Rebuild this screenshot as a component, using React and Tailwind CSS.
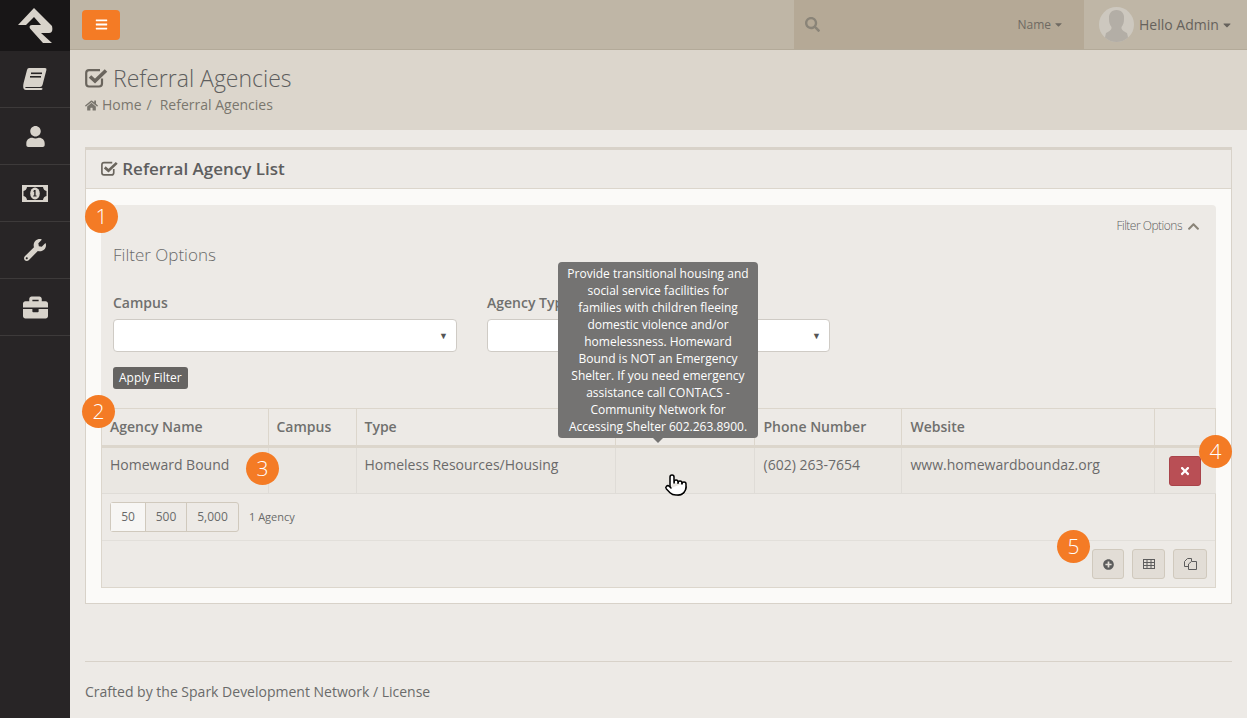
import {
  FaBars,
  FaSearch,
  FaCaretDown,
  FaHome,
  FaChevronUp,
  FaTimes,
  FaPlusCircle,
  FaUser,
  FaWrench,
  FaBriefcase,
} from "react-icons/fa";
import { Pointer } from "lucide-react";

function Logo() {
  return (
    <svg width="35" height="36" viewBox="0 0 35 36" fill="#d8d3cb">
      <path d="M0 17 L16 0 L34 18 Q35.5 25 31 25 L23 25 L34 35 L25 35 L12 20.5 Q10.5 17 14 17 L23 17 L16 9 L8 17 Z" />
    </svg>
  );
}

function BookIcon() {
  return (
    <svg width="24" height="22" viewBox="0 0 24 22" fill="#d8d3cb">
      <path d="M6 0 H22 Q24 0 23.4 2 L19.5 17 Q19 19 17 19 H3 Q2 19 2.3 20 H18 Q20 20 19.5 21 Q19.3 22 18 22 H3 Q0 22 0.2 18 Q0.2 17 0.6 15 L4 2 Q4.4 0 6 0 Z" />
      <rect x="8" y="4.5" width="11" height="1.6" fill="#282526" />
      <rect x="7" y="8" width="11" height="1.6" fill="#282526" />
    </svg>
  );
}

function MoneyIcon() {
  return (
    <svg width="26" height="17" viewBox="0 0 26 17">
      <rect width="26" height="17" fill="#d8d3cb" />
      <path d="M5 2 H21 Q21.5 5.5 24.5 6 V11 Q21.5 11.5 21 15 H5 Q4.5 11.5 1.5 11 V6 Q4.5 5.5 5 2 Z" fill="#282526" />
      <ellipse cx="13" cy="8.5" rx="4.8" ry="6" fill="#d8d3cb" />
      <path d="M12 5 h1.6 v5.5 h1 v1 h-3.4 v-1 h1 v-3.8 h-1 z" fill="#282526" />
    </svg>
  );
}

function CheckBox({ size, color }) {
  return (
    <svg width={size * 1.15} height={size} viewBox="0 0 23 20" fill="none" stroke={color}>
      <path d="M17 10.5 V15.5 Q17 18.5 14 18.5 H4 Q1.2 18.5 1.2 15.5 V5 Q1.2 2.2 4 2.2 H15" strokeWidth="2.2" />
      <path d="M5 8.5 L10 13 L21 2.5" strokeWidth="3.6" />
    </svg>
  );
}

function Avatar() {
  return (
    <svg width="35" height="35" viewBox="0 0 35 35" className="rounded-full">
      <rect width="35" height="35" fill="#cdc8bf" />
      <path d="M17.5 3 C23 3 25.5 7 25 12 C25 16 24 18 22.5 20 C22 23 25 24.5 28 26 Q29 30 30 35 H5 Q6 30 7 26 C10 24.5 13 23 12.5 20 C11 18 10 16 10 12 C9.5 7 12 3 17.5 3 Z" fill="#b3aea6" />
    </svg>
  );
}

function TableIcon() {
  return (
    <svg width="12" height="10" viewBox="0 0 12 10" fill="none" stroke="#5c5c5c" strokeWidth="1">
      <rect x="0.5" y="0.5" width="11" height="9" />
      <path d="M0.5 3.5 H11.5 M0.5 6.5 H11.5 M4 0.5 V9.5 M8 0.5 V9.5" />
    </svg>
  );
}

function CopyIcon() {
  return (
    <svg width="13" height="12" viewBox="0 0 13 12" fill="none" stroke="#5c5c5c" strokeWidth="1">
      <path d="M7.5 3 V0.5 H3.5 L0.5 3.5 V8.5 H4" />
      <path d="M4.5 11.5 V6 L7.5 3.5 H12.5 V11.5 Z" />
    </svg>
  );
}

function Badge({ n, className }) {
  return (
    <div className={`absolute z-20 w-[33px] h-[33px] rounded-full bg-[#f47b25] text-white text-[21px] font-light flex items-center justify-center ${className}`}>
      {n}
    </div>
  );
}

function SideItem({ children }) {
  return (
    <div className="h-[57px] border-b border-[#3d3a3a] flex items-center justify-center">
      {children}
    </div>
  );
}

function SelectBox({ label, width }) {
  return (
    <div className={width}>
      <label className="block font-semibold text-[14px] leading-5 mb-[6px] text-[#70706e]">{label}</label>
      <div className="h-[33px] bg-white border border-[#cfcbc5] rounded-[4px] flex items-center justify-end pr-2 text-[#555] text-[9px]">
        ▼
      </div>
    </div>
  );
}

const headers = [
  { label: "Agency Name", w: "w-[166px] pl-2" },
  { label: "Campus", w: "w-[88px] pl-2" },
  { label: "Type", w: "w-[259px] pl-2" },
  { label: "", w: "w-[139px] pl-2" },
  { label: "Phone Number", w: "w-[147px] pl-[9px]" },
  { label: "Website", w: "w-[253px] pl-[9px]" },
  { label: "", w: "w-[62px]" },
];

export default function App() {
  return (
    <div
      className="relative flex h-[718px] overflow-hidden bg-[#edeae6] text-[14px] text-[#6a6a6a]"
      style={{ fontFamily: '"Open Sans", sans-serif' }}
    >
      {/* Sidebar */}
      <aside className="w-[70px] shrink-0 bg-[#282526]">
        <div className="h-[51px] bg-[#181617] flex items-center justify-center">
          <Logo />
        </div>
        <SideItem><BookIcon /></SideItem>
        <SideItem><FaUser size={21} className="text-[#d8d3cb]" /></SideItem>
        <SideItem><MoneyIcon /></SideItem>
        <SideItem><FaWrench size={22} className="text-[#d8d3cb]" /></SideItem>
        <SideItem><FaBriefcase size={25} className="text-[#d8d3cb]" /></SideItem>
      </aside>

      <div className="flex-1 min-w-0 flex flex-col">
        {/* Top bar */}
        <header className="h-[50px] shrink-0 bg-[#bfb6a6] border-b border-[#b3aa99] flex items-center">
          <div className="flex-1 pl-3">
            <button className="w-[38px] h-[30px] rounded-[4px] bg-[#f47b25] text-white flex items-center justify-center">
              <FaBars size={13} />
            </button>
          </div>
          <div className="w-[290px] h-full bg-[#b5a996] flex items-center justify-between pl-[11px] pr-[20px] text-[#6f6a62]">
            <FaSearch size={15} className="text-[#8a8478]" />
            <span className="flex items-center gap-[2px] text-[12px]">Name <FaCaretDown size={11} /></span>
          </div>
          <div className="w-[163px] h-full flex items-center pl-[15px] gap-[5px] text-[#66625c]">
            <Avatar />
            <span className="flex items-center gap-[2px] text-[14px]">Hello Admin <FaCaretDown size={12} /></span>
          </div>
        </header>

        {/* Page title */}
        <div className="h-[80px] shrink-0 bg-[#dcd6cc] px-[15px] pt-[13px]">
          <h1 className="flex items-center gap-[5px] text-[23px] leading-[30px] font-light text-[#5e5e5e]">
            <CheckBox size={20} color="#6a655d" /> Referral Agencies
          </h1>
          <div className="flex items-center mt-[2px] text-[14px] leading-5 text-[#7a766e]">
            <FaHome size={13} className="mr-[4px]" /> Home <span className="ml-[5px] mr-[8px]">/</span> Referral Agencies
          </div>
        </div>

        {/* Main */}
        <main className="flex-1 px-[15px] pt-[17px] flex flex-col">
          <section className="h-[457px] bg-[#fbfaf8] border border-[#d8d2c9] border-t-[3px]">
            <div className="h-[39px] bg-[#edeae6] border-b border-[#dcd6cc] flex items-center gap-[4px] px-[15px] pb-[1px] text-[17px] font-semibold text-[#5e5e5e]">
              <CheckBox size={15} color="#6a655d" /> Referral Agency List
            </div>

            <div className="px-[15px] pt-[16px]">
              {/* Filter */}
              <div className="h-[203px] bg-[#edeae6] rounded-t-[4px] px-[12px] pt-[12px]">
                <div className="flex justify-end items-center gap-[4px] pr-[4px] text-[12px] tracking-[-0.5px] font-light text-[#5e5e5e]">
                  Filter Options <FaChevronUp size={13} className="text-[#8a8478] ml-[1px]" />
                </div>
                <h3 className="mt-[8px] text-[17px] leading-6 font-light text-[#6a6a6a]">Filter Options</h3>
                <div className="flex gap-[30px] mt-[26px]">
                  <SelectBox label="Campus" width="w-[344px]" />
                  <SelectBox label="Agency Type" width="w-[343px]" />
                </div>
                <button className="mt-[15px] h-[22px] px-[6px] rounded-[3px] bg-[#666462] text-white text-[12px] flex items-center">
                  Apply Filter
                </button>
              </div>

              {/* Grid */}
              <div className="bg-[#edeae6] border border-[#dcd6cc] border-t-0">
                <table className="w-full table-fixed border-collapse">
                  <thead>
                    <tr className="h-[38px] border-t border-b-[3px] border-[#dcd6cc]">
                      {headers.map((h, i) => (
                        <th key={i} className={`${h.w} pb-[2px] text-left font-semibold text-[14px] text-[#70706e] ${i < 6 ? "border-r border-[#dcd6cc]" : ""}`}>
                          {h.label}
                        </th>
                      ))}
                    </tr>
                  </thead>
                  <tbody>
                    <tr className="h-[47px] bg-[#eae7e2] border-b border-[#dfdcd7]">
                      <td className="px-2 pt-[6px] align-top border-r border-[#dfdcd7]">Homeward Bound</td>
                      <td className="border-r border-[#dfdcd7]"></td>
                      <td className="px-2 pt-[6px] align-top border-r border-[#dfdcd7]">Homeless Resources/Housing</td>
                      <td className="border-r border-[#dfdcd7]"></td>
                      <td className="pl-[9px] pt-[6px] align-top border-r border-[#dfdcd7]">(602) 263-7654</td>
                      <td className="pl-[9px] pt-[6px] align-top border-r border-[#dfdcd7]">www.homewardboundaz.org</td>
                      <td className="pl-[14px] align-middle">
                        <button className="w-[32px] h-[30px] rounded-[3px] bg-[#b94f55] border border-[#a9444a] text-white flex items-center justify-center">
                          <FaTimes size={12} />
                        </button>
                      </td>
                    </tr>
                  </tbody>
                </table>

                {/* Pager */}
                <div className="h-[47px] border-b border-[#e2dfda] flex items-center px-2 gap-[10px]">
                  <div className="flex h-[30px] border border-[#d0c9bd] rounded-[3px] text-[12px]">
                    <span className="w-[35px] bg-[#f7f6f4] flex items-center justify-center border-r border-[#d0c9bd]">50</span>
                    <span className="w-[41px] flex items-center justify-center border-r border-[#d0c9bd]">500</span>
                    <span className="w-[51px] flex items-center justify-center">5,000</span>
                  </div>
                  <span className="text-[11px]">1 Agency</span>
                </div>

                {/* Actions */}
                <div className="h-[46px] flex items-center justify-end gap-[8px] pr-[8px]">
                  <button className="w-[32px] h-[30px] rounded-[3px] bg-[#e2ddd6] border border-[#d0c9bd] text-[#5c5c5c] flex items-center justify-center"><FaPlusCircle size={11} /></button>
                  <button className="w-[33px] h-[30px] rounded-[3px] bg-[#e2ddd6] border border-[#d0c9bd] flex items-center justify-center"><TableIcon /></button>
                  <button className="w-[34px] h-[30px] rounded-[3px] bg-[#e2ddd6] border border-[#d0c9bd] flex items-center justify-center"><CopyIcon /></button>
                </div>
              </div>
            </div>
          </section>

          {/* Footer */}
          <footer className="mt-[57px] border-t border-[#d8d2c9] pt-[19px] text-[14px] text-[#6a6a6a]">
            Crafted by the Spark Development Network / License
          </footer>
        </main>
      </div>

      {/* Tooltip */}
      <div className="absolute z-10 left-[558px] top-[262px] w-[200px] h-[176px] rounded-[4px] bg-[#747372] text-white text-[12px] leading-[17px] text-center px-[8px] py-[3px]">
        Provide transitional housing and social service facilities for families with children fleeing domestic violence and/or homelessness. Homeward Bound is NOT an Emergency Shelter. If you need emergency assistance call CONTACS - Community Network for Accessing Shelter 602.263.8900.
        <div className="absolute left-1/2 -translate-x-1/2 top-full w-0 h-0 border-x-[5px] border-x-transparent border-t-[5px] border-t-[#747372]"></div>
      </div>

      <Pointer size={24} strokeWidth={1.5} className="absolute z-30 left-[664px] top-[473px] text-black fill-white" />

      <Badge n="1" className="left-[85px] top-[200px]" />
      <Badge n="2" className="left-[82px] top-[395px]" />
      <Badge n="3" className="left-[246px] top-[452px]" />
      <Badge n="4" className="left-[1199px] top-[435px]" />
      <Badge n="5" className="left-[1057px] top-[530px]" />
    </div>
  );
}
